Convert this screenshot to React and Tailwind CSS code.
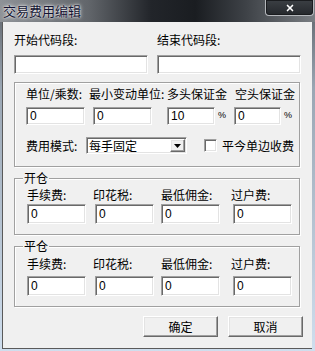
import React from 'react';
import { X } from 'lucide-react';

/**
 * 交易费用编辑 dialog, classic Windows look
 */

const sunken =
  'bg-white border border-t-[#a0a0a0] border-l-[#a0a0a0] border-r-white border-b-white shadow-[inset_1px_1px_0_#696969,inset_-1px_-1px_0_#e3e3e3]';

const raised =
  'bg-[#f0f0f0] border border-t-white border-l-white border-r-[#696969] border-b-[#696969] shadow-[inset_-1px_-1px_0_#a0a0a0,inset_1px_1px_0_#e3e3e3]';

const etched = 'border border-[#a0a0a0] shadow-[inset_1px_1px_0_#fff,1px_1px_0_#fff]';

function TextBox({ value = '', className = '' }) {
  return (
    <div className={`${sunken} ${className} flex items-center pl-[3px] font-['Liberation_Sans',sans-serif] text-[12px] leading-none text-black`}>
      {value}
    </div>
  );
}

function Label({ children, className = '' }) {
  return <div className={`h-[14px] text-[12px] leading-[14px] whitespace-nowrap ${className}`}>{children}</div>;
}

function TitleBar() {
  return (
    <div className="flex h-[22px] items-start justify-between bg-[linear-gradient(90deg,#8e9297_0%,#62666b_28%,#22252a_48%,#1a1d21_62%,#3e4247_78%,#7a7e83_100%)]">
      <div className="pl-[3px] pt-[3px] text-[13px] leading-[15px] text-[#141432] [text-shadow:0_0_4px_#ffffff,0_0_2px_#ffffff]">
        交易费用编辑
      </div>
      <div className="mr-[1px] flex h-[16px] w-[49px] items-center justify-center rounded-b-[4px] border border-t-0 border-[#b4b7bb] bg-[linear-gradient(180deg,#3b3f44,#25282c)] shadow-[inset_0_0_0_1px_#1a1c1f]">
        <X size={10} strokeWidth={4} color="#ffffff" />
      </div>
    </div>
  );
}

function GroupBox({ title, className = '', children }) {
  return (
    <div className={`relative ${etched} ${className}`}>
      {title && (
        <span className="absolute left-[8px] top-[-8px] bg-[#f0f0f0] px-[1px] text-[12px] leading-[14px]">
          {title}
        </span>
      )}
      {children}
    </div>
  );
}

function FeeRow({ mt, gap, inputH }) {
  const cols = [
    { label: '手续费:', w: 'w-[66px]', inset: '' },
    { label: '印花税:', w: 'w-[68px]', inset: 'ml-[2px]' },
    { label: '最低佣金:', w: 'w-[70px]', inset: '' },
    { label: '过户费:', w: 'w-[66px]', inset: 'ml-[2px]' },
  ];
  return (
    <div className={`flex pl-[12px] ${mt}`}>
      {cols.map((c) => (
        <div key={c.label} className={`flex flex-col ${c.w}`}>
          <Label>{c.label}</Label>
          <TextBox value="0" className={`${gap} ${inputH} w-[59px] ${c.inset}`} />
        </div>
      ))}
    </div>
  );
}

export default function App() {
  return (
    <div className="flex h-[351px] w-[315px] flex-col overflow-hidden bg-[linear-gradient(180deg,#5c6066_0%,#9aa6b3_25%,#cfdeee_100%)] font-['Noto_Sans_CJK_SC',sans-serif] text-black">
      <TitleBar />

      <div className="ml-[2px] h-[327px] w-[310px] border-b border-l border-[#5a5a5a] bg-[#f0f0f0] pl-[11px]">
        {/* code range */}
        <div className="mt-[11px] flex gap-[9px]">
          <div className="flex flex-col">
            <Label>开始代码段:</Label>
            <TextBox className="mt-[8px] h-[19px] w-[134px]" />
          </div>
          <div className="flex flex-col">
            <Label>结束代码段:</Label>
            <TextBox className="mt-[8px] h-[19px] w-[144px]" />
          </div>
        </div>

        {/* unit / margin */}
        <GroupBox className="mt-[8px] h-[85px] w-[286px]">
          <div className="mt-[4px] flex pl-[11px]">
            <Label className="w-[63px]">单位/乘数:</Label>
            <Label className="w-[78px]">最小变动单位:</Label>
            <Label className="w-[68px]">多头保证金</Label>
            <Label>空头保证金</Label>
          </div>
          <div className="mt-[6px] flex items-center pl-[11px]">
            <TextBox value="0" className="h-[18px] w-[59px]" />
            <TextBox value="0" className="ml-[8px] h-[18px] w-[59px]" />
            <TextBox value="10" className="ml-[15px] h-[18px] w-[48px]" />
            <span className="ml-[3px] w-[8px] font-['Liberation_Sans',sans-serif] text-[9px]">%</span>
            <TextBox value="0" className="ml-[8px] h-[18px] w-[47px]" />
            <span className="ml-[3px] font-['Liberation_Sans',sans-serif] text-[9px]">%</span>
          </div>
          <div className="mt-[12px] flex items-center pl-[11px]">
            <Label className="w-[60px]">费用模式:</Label>
            <div className={`${sunken} flex h-[17px] w-[101px] items-center justify-between pl-[2px] pr-[1px]`}>
              <span className="text-[12px] leading-[14px]">每手固定</span>
              <span className={`${raised} flex h-[13px] w-[15px] items-center justify-center`}>
                <svg width="7" height="4" viewBox="0 0 7 4">
                  <path d="M0 0h7L3.5 4z" fill="#000" />
                </svg>
              </span>
            </div>
            <span className={`${sunken} ml-[17px] h-[13px] w-[13px]`} />
            <Label className="ml-[5px]">平今单边收费</Label>
          </div>
        </GroupBox>

        <GroupBox title="开仓" className="mt-[11px] h-[57px] w-[286px]">
          <FeeRow mt="mt-[9px]" gap="mt-[2px]" inputH="h-[20px]" />
        </GroupBox>

        <GroupBox title="平仓" className="mt-[11px] h-[61px] w-[286px]">
          <FeeRow mt="mt-[10px]" gap="mt-[5px]" inputH="h-[20px]" />
        </GroupBox>

        <div className="mt-[9px] flex gap-[10px] pl-[129px]">
          <button className={`${raised} h-[21px] w-[75px] text-[12px] leading-[14px]`}>确定</button>
          <button className={`${raised} h-[21px] w-[75px] text-[12px] leading-[14px]`}>取消</button>
        </div>
      </div>
    </div>
  );
}
